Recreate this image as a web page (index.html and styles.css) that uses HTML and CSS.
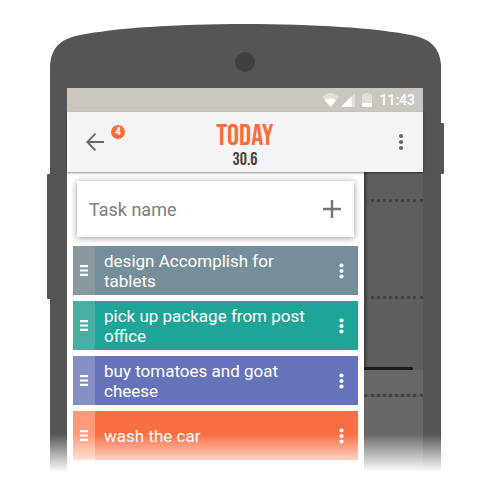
FILE: index.html
```html
<!DOCTYPE html>
<html lang="en">
<head>
<meta charset="utf-8">
<meta name="viewport" content="width=device-width, initial-scale=1">
<title>Today</title>
<link rel="stylesheet" href="styles.css">
</head>
<body>
<div class="phone">
  <span class="side-key volume"></span>
  <span class="side-key power"></span>
  <svg class="shell-top" viewBox="0 0 391 64" preserveAspectRatio="none" aria-hidden="true">
    <path fill="#555" d="M0 64V42C1 24 10 15 30 11C66 4 125 0 195 0S325 4 361 11C381 15 390 24 391 42V64Z"/>
    <circle cx="195" cy="38" r="10" fill="#404040"/>
  </svg>
  <div class="shell">
    <div class="status">
      <svg width="17" height="14" viewBox="0 0 17 14" aria-hidden="true">
        <path fill="#fff" opacity=".42" d="M0 4Q8.500-4 17 4L8.500 14Z"/>
        <path fill="#fff" d="M3 7.500Q8.500 3 14 7.500L8.500 14Z"/>
      </svg>
      <svg width="14" height="14" viewBox="0 0 14 14" aria-hidden="true">
        <path fill="#fff" opacity=".42" d="M14 0V14H0Z"/>
        <path fill="#fff" d="M10.500 3.500V14H0Z"/>
      </svg>
      <svg class="battery" width="10" height="14" viewBox="0 0 10 14" aria-hidden="true">
        <path fill="#fff" opacity=".42" d="M1 1H3V0H7V1H9Q10 1 10 2V10H0V2Q0 1 1 1Z"/>
        <path fill="#fff" d="M0 10H10V13Q10 14 9 14H1Q0 14 0 13Z"/>
      </svg>
      <time>11:43</time>
    </div>
    <header class="bar">
      <div class="bar-start">
        <button class="icon-button" aria-label="Back">
          <svg width="18" height="18" viewBox="0 0 18 18" fill="none" stroke="#666" stroke-width="1.800"><path d="M18 9H1.500M9.500 .7L1.300 9L9.500 17.300"/></svg>
        </button>
        <span class="badge">4</span>
      </div>
      <div class="heading">
        <h1>TODAY</h1>
        <p>30.6</p>
      </div>
      <button class="icon-button bar-menu" aria-label="More options">
        <svg width="6" height="18" viewBox="0 0 6 18" fill="#666"><circle cx="3" cy="3" r="2.100"/><circle cx="3" cy="9" r="2.100"/><circle cx="3" cy="15" r="2.100"/></svg>
      </button>
    </header>
    <div class="content">
      <main class="drawer">
        <form class="new-task">
          <input type="text" placeholder="Task name" aria-label="Task name">
          <button class="icon-button" type="button" aria-label="Add task">
            <svg width="18" height="18" viewBox="0 0 18 18" stroke="#737373" stroke-width="2.400"><path d="M9 0V18M0 9H18"/></svg>
          </button>
        </form>
        <ul class="tasks">
          <li class="task slate">
            <span class="handle"><svg width="8" height="11" viewBox="0 0 8 11" fill="#fff" aria-hidden="true"><path d="M0 0H8V2.200H0ZM0 4.400H8V6.600H0ZM0 8.800H8V11H0Z"/></svg></span>
            <span class="task-name">design Accomplish for tablets</span>
            <button class="icon-button" aria-label="Task options"><svg width="5" height="16" viewBox="0 0 5 16" fill="#fff"><circle cx="2.500" cy="2.500" r="2.100"/><circle cx="2.500" cy="8" r="2.100"/><circle cx="2.500" cy="13.500" r="2.100"/></svg></button>
          </li>
          <li class="task teal">
            <span class="handle"><svg width="8" height="11" viewBox="0 0 8 11" fill="#fff" aria-hidden="true"><path d="M0 0H8V2.200H0ZM0 4.400H8V6.600H0ZM0 8.800H8V11H0Z"/></svg></span>
            <span class="task-name">pick up package from post office</span>
            <button class="icon-button" aria-label="Task options"><svg width="5" height="16" viewBox="0 0 5 16" fill="#fff"><circle cx="2.500" cy="2.500" r="2.100"/><circle cx="2.500" cy="8" r="2.100"/><circle cx="2.500" cy="13.500" r="2.100"/></svg></button>
          </li>
          <li class="task indigo">
            <span class="handle"><svg width="8" height="11" viewBox="0 0 8 11" fill="#fff" aria-hidden="true"><path d="M0 0H8V2.200H0ZM0 4.400H8V6.600H0ZM0 8.800H8V11H0Z"/></svg></span>
            <span class="task-name">buy tomatoes and goat cheese</span>
            <button class="icon-button" aria-label="Task options"><svg width="5" height="16" viewBox="0 0 5 16" fill="#fff"><circle cx="2.500" cy="2.500" r="2.100"/><circle cx="2.500" cy="8" r="2.100"/><circle cx="2.500" cy="13.500" r="2.100"/></svg></button>
          </li>
          <li class="task orange">
            <span class="handle"><svg width="8" height="11" viewBox="0 0 8 11" fill="#fff" aria-hidden="true"><path d="M0 0H8V2.200H0ZM0 4.400H8V6.600H0ZM0 8.800H8V11H0Z"/></svg></span>
            <span class="task-name">wash the car</span>
            <button class="icon-button" aria-label="Task options"><svg width="5" height="16" viewBox="0 0 5 16" fill="#fff"><circle cx="2.500" cy="2.500" r="2.100"/><circle cx="2.500" cy="8" r="2.100"/><circle cx="2.500" cy="13.500" r="2.100"/></svg></button>
          </li>
        </ul>
      </main>
      <aside class="timeline" aria-hidden="true">
        <div class="slot first"></div>
        <div class="slot second"></div>
        <div class="slot third"><span class="now"></span></div>
        <div class="slot last"></div>
      </aside>
    </div>
  </div>
</div>
</body>
</html>
```
FILE: styles.css
```css
* {
  box-sizing: border-box;
}

body {
  margin: 0;
  padding: 24px 50px 0;
  background: #fff;
  font-family: Roboto, "Liberation Sans", sans-serif;
}

h1, p, ul {
  margin: 0;
  padding: 0;
}

.phone {
  position: relative;
}

/* The lower end of the device fades into the page. */
.phone::after {
  content: "";
  position: absolute;
  bottom: 0;
  left: 0;
  right: 0;
  height: 38px;
  background: linear-gradient(rgba(255, 255, 255, 0), #fff);
}

.side-key {
  position: absolute;
  width: 6px;
  background: #555;
  border-radius: 1px;
}

.volume {
  top: 150px;
  left: -3px;
  height: 125px;
}

.power {
  top: 99px;
  right: -3px;
  height: 51px;
}

.shell-top {
  display: block;
  position: relative;
  width: 100%;
  height: 64px;
}

.shell {
  position: relative;
  padding: 0 18px 0 17px;
  background: #555;
}

.status {
  display: flex;
  align-items: center;
  justify-content: flex-end;
  gap: 2px;
  height: 24px;
  padding-right: 8px;
  background: #cbc7c0;
  color: #fff;
  font-size: 14px;
  font-weight: 500;
}

.battery {
  margin: 0 5px;
}

.bar {
  position: relative;
  z-index: 1;
  display: grid;
  grid-template-columns: 1fr auto 1fr;
  align-items: center;
  height: 60px;
  padding: 0 19px;
  background: #f4f4f4;
  box-shadow: 0 1px 2px rgba(0, 0, 0, .45);
}

.bar-start {
  display: flex;
  align-items: center;
  gap: 7px;
}

.icon-button {
  display: flex;
  padding: 0;
  border: 0;
  background: none;
}

.bar-menu {
  justify-self: end;
}

.badge {
  width: 14px;
  height: 14px;
  margin-bottom: 20px;
  border-radius: 50%;
  background: #fb6b3d;
  color: #fff;
  font-size: 10px;
  font-weight: 700;
  line-height: 14px;
  text-align: center;
}

.heading {
  padding-top: 12px;
  font-family: "Bebas Neue", "Roboto Condensed", "Liberation Sans Narrow", "Liberation Sans", sans-serif;
  font-weight: 400;
  line-height: 24px;
  text-align: center;
}

.heading h1 {
  color: #fb6b3d;
  font-size: 30px;
  font-weight: 400;
}

.heading p {
  color: #444;
  font-size: 18px;
}

.content {
  display: flex;
}

.drawer {
  flex: 1;
  min-width: 0;
  padding: 9px 6px 12px;
  background: #fff;
}

.new-task {
  display: flex;
  align-items: center;
  height: 56px;
  margin: 0 4px 9px;
  padding: 0 13px 0 12px;
  background: #fff;
  box-shadow: 0 1px 7px rgba(0, 0, 0, .4);
}

.new-task input {
  flex: 1;
  min-width: 0;
  padding: 0;
  border: 0;
  outline: 0;
  background: none;
  color: #777;
  font: 18px Roboto, "Liberation Sans", sans-serif;
}

.new-task input::placeholder {
  color: #7d7d7d;
  opacity: 1;
}

.tasks {
  display: grid;
  gap: 6px;
  list-style: none;
}

.task {
  display: flex;
  align-items: center;
  height: 49px;
  padding-right: 14px;
  color: #fff;
  font-size: 17px;
  line-height: 20px;
}

.handle {
  display: flex;
  align-items: center;
  justify-content: center;
  width: 22px;
  height: 100%;
}

.task-name {
  flex: 1;
  padding: 0 24px 0 9px;
}

.slate { background: #768e99; }
.slate .handle { background: #879aa1; }
.teal { background: #1ea597; }
.teal .handle { background: #4aaea2; }
.indigo { background: #6672b9; }
.indigo .handle { background: #8690c5; }
.orange { background: #f96e42; }
.orange .handle { background: #ff997a; }

.timeline {
  display: flex;
  flex-direction: column;
  width: 59px;
  background: #5e5e5e;
  box-shadow: inset 3px 0 3px -1px rgba(0, 0, 0, .4);
}

.slot {
  border-bottom: 3px dotted #424242;
}

.first { height: 30px; }
.second { height: 97px; }

.third {
  display: flex;
  align-items: flex-end;
  height: 98px;
  background: linear-gradient(transparent 71px, #676767 71px);
}

.now {
  width: 49px;
  height: 3px;
  margin-bottom: 24px;
  border-radius: 0 2px 2px 0;
  background: #1c1c1c;
}

.last {
  flex: 1;
  border: 0;
  background: #676767;
}
```
